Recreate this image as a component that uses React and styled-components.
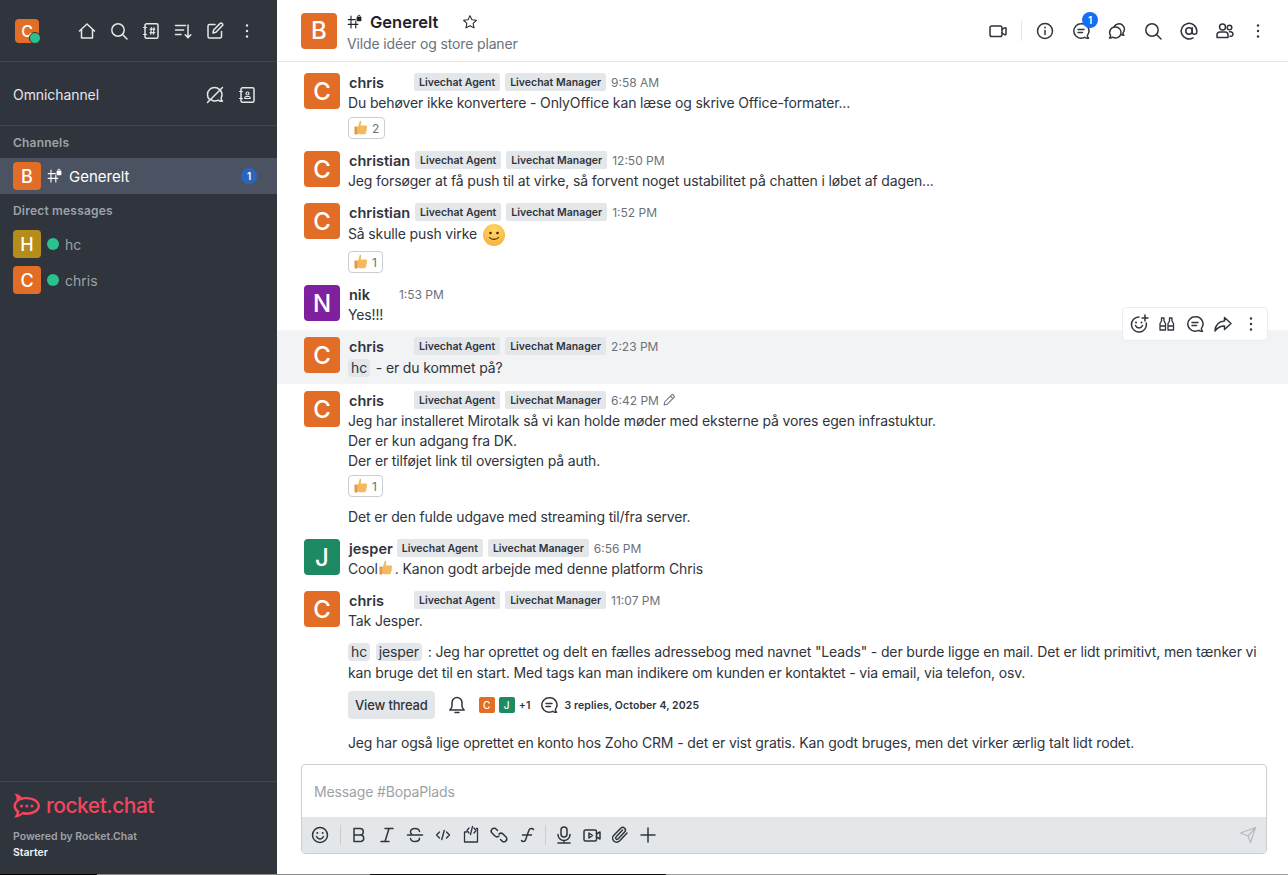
import React from 'react';
import styled, { createGlobalStyle } from 'styled-components';

const GlobalStyle = createGlobalStyle`
    html, body { margin: 0; padding: 0; height: 100%; background: #fff; }
    body { font-family: Inter, "Noto Sans", "Liberation Sans", sans-serif; overflow: hidden; }
    #root { height: 100%; }
`;

const Svg = ({ size = 20, sw = 1.5, children }) => (
    <svg width={size} height={size} viewBox="0 0 20 20" fill="none" stroke="currentColor" strokeWidth={sw} strokeLinecap="round" strokeLinejoin="round">
        {children}
    </svg>
);

const Dots = () => (
    <Svg>
        <circle cx="10" cy="4.5" r="1.2" fill="currentColor" stroke="none" />
        <circle cx="10" cy="10" r="1.2" fill="currentColor" stroke="none" />
        <circle cx="10" cy="15.5" r="1.2" fill="currentColor" stroke="none" />
    </Svg>
);
const Home = () => <Svg><path d="M2.5 10 10 3l7.5 7M4.5 8.5V17h11V8.5" /></Svg>;
const Search = () => <Svg><circle cx="9" cy="9" r="6.2" /><path d="m13.5 13.5 4.5 4.5" /></Svg>;
const Directory = () => (
    <Svg>
        <rect x="4" y="2.8" width="13" height="14.4" rx="1.5" />
        <path d="M2.5 6.5h3M2.5 13.5h3M9 8.2h4.8M9 11.6h4.8M10.4 6.6l-.6 6.6M13 6.6l-.6 6.6" strokeWidth="1.2" />
    </Svg>
);
const Sort = () => <Svg><path d="M2.5 4.5h10M2.5 9h8M2.5 13.5h5.5M15 4v12.5M12.2 13.8l2.8 2.8 2.8-2.8" /></Svg>;
const Compose = () => (
    <Svg>
        <path d="M16.5 10.5v5a1.5 1.5 0 0 1-1.5 1.5H4.5A1.5 1.5 0 0 1 3 15.5V5a1.5 1.5 0 0 1 1.5-1.5h5.5" />
        <path d="m8 12 .6-3L15.2 2.4a1.3 1.3 0 0 1 1.9 0l.3.3a1.3 1.3 0 0 1 0 1.9L10.9 11.3z" />
    </Svg>
);
const ChatOff = () => (
    <Svg>
        <path d="M4.5 14.5A7 7 0 0 1 14.6 4.6c2.5 2.2 3 5.4 1.5 8.2-.2 1 .5 2.5 1.400 3.2-1.800.5-3.200 0-4.200-.8-2.500 1.300-5.300 1-7.300-.5" />
        <path d="M2.5 17.5 17.5 2.5" />
    </Svg>
);
const ContactBook = () => (
    <Svg>
        <rect x="4" y="2.8" width="13" height="14.4" rx="1.5" />
        <path d="M2.5 6.5h3M2.5 13.5h3" strokeWidth="1.2" />
        <circle cx="10.5" cy="8.5" r="1.5" strokeWidth="1.2" />
        <path d="M7.8 13.5v-.5c0-1 .8-1.5 1.5-1.5h2.400c.7 0 1.500.5 1.500 1.500v.5z" strokeWidth="1.2" />
    </Svg>
);
const HashLock = ({ size = 16 }) => (
    <Svg size={size} sw={1.4}>
        <path d="M1.5 7h9M1.5 13h12M5 2.5 5 17.5M11 9v8.500" />
        <rect x="12" y="3.5" width="6" height="5.5" rx="1" fill="currentColor" stroke="none" />
        <path d="M13.5 3.8V3a1.500 1.500 0 0 1 3 0v.8" strokeWidth="1.1" />
    </Svg>
);
const Star = () => <Svg size={16} sw={1.3}><path d="m10 2 2.400 5.200 5.600.7-4.100 3.900 1.100 5.600-5-2.800-5 2.800 1.100-5.600L2 7.900l5.600-.7z" /></Svg>;
const Video = () => <Svg><rect x="2" y="5" width="12" height="10.5" rx="1.8" /><path d="m14 8.500 2.500-1.700c.6-.3 1.500 0 1.500.8v5.300c0 .8-.9 1.100-1.500.8L14 12" /></Svg>;
const Info = () => <Svg><circle cx="10" cy="10" r="7.5" /><path d="M10 9.500v4" /><circle cx="10" cy="6.5" r=".9" fill="currentColor" stroke="none" /></Svg>;
const Thread = () => (
    <Svg>
        <path d="M10 2.800a7.200 7.200 0 0 0 0 14.400c1.500 0 3-.1 3.800-.9.800.7 2.200 1.300 3.700.9-.8-.8-1.200-1.800-1.100-2.800A7.200 7.200 0 0 0 10 2.800z" />
        <path d="M7 8.500h6M7 11.500h4.500" />
    </Svg>
);
const Discussion = () => (
    <Svg>
        <path d="M8.500 6a5.500 5.500 0 1 1-2.800 10.200c-.8.6-1.900.9-3.200.8.700-.7 1.100-1.500 1.100-2.500A5.500 5.500 0 0 1 8.500 6z" />
        <path d="M7.200 5.500a5.500 5.500 0 1 1 8.800 6.500c-.1.900.2 1.600.8 2.200-.9.100-1.600-.1-2.300-.6" />
    </Svg>
);
const At = () => <Svg><circle cx="10" cy="10" r="3.2" /><path d="M13.200 6.800V11a2.300 2.300 0 0 0 4.600 0v-1A7.800 7.800 0 1 0 14 16.800" /></Svg>;
const Team = () => (
    <Svg>
        <circle cx="7.5" cy="6" r="3" />
        <path d="M2 16.500V14a3 3 0 0 1 3-3h5a3 3 0 0 1 3 3v2.500z" />
        <circle cx="14.500" cy="6.500" r="2.300" />
        <path d="M14.500 10.800h.8a2.800 2.800 0 0 1 2.700 2.800c0 1-.8 1.600-1.800 1.600h-1.200" />
    </Svg>
);
const SmilePlus = () => (
    <Svg>
        <path d="M10 3a7.500 7.500 0 1 0 7.300 6" />
        <path d="M6.500 11.500c.8 1.800 2.200 2.500 3.500 2.500s2.700-.7 3.500-2.500" />
        <circle cx="7" cy="8.500" r="1" fill="currentColor" stroke="none" />
        <circle cx="12.500" cy="8.500" r="1" fill="currentColor" stroke="none" />
        <path d="M16 1v6M13 4h6" />
    </Svg>
);
const Quote = () => (
    <Svg sw={1.3}>
        <path d="M3 16V9.500l1.500-2.500V4H7v3l1.500 2.500V16zM11 16V9.500L12.500 7V4H15v3l1.500 2.500V16zM3 12h5.500M11 12h5.500" />
    </Svg>
);
const Forward = () => <Svg><path d="M11.500 3.500 18 9.500l-6.500 6v-3.500C7.500 12 4.500 13.500 2 17c.3-5.500 3.500-9.500 9.500-10z" /></Svg>;
const Pencil = () => <Svg size={14}><path d="m3 17 1-4.500L13.800 2.800a1.500 1.500 0 0 1 2.200 0l1.200 1.200a1.500 1.500 0 0 1 0 2.200L7.500 16zM12 4.500l3.500 3.500" /></Svg>;
const Bell = () => <Svg><path d="M10 2.500a5 5 0 0 0-5 5v3.500c0 1.500-1 3-2.200 4h14.400c-1.200-1-2.200-2.500-2.200-4V7.500a5 5 0 0 0-5-5zM8 17.500h4" /></Svg>;
const Smile = () => (
    <Svg>
        <circle cx="10" cy="10" r="7.5" />
        <path d="M6.500 11.500c.8 1.800 2.200 2.500 3.500 2.500s2.700-.7 3.500-2.500" />
        <circle cx="7.300" cy="8" r="1" fill="currentColor" stroke="none" />
        <circle cx="12.700" cy="8" r="1" fill="currentColor" stroke="none" />
    </Svg>
);
const Bold = () => <Svg><path d="M5 3.500h6a3.200 3.200 0 0 1 0 6.500H5zM5 10h7a3.300 3.300 0 0 1 0 6.500H5z" /></Svg>;
const Italic = () => <Svg><path d="M8 3.500h8M4 16.500h8M12 3.500 8 16.500" /></Svg>;
const Strike = () => <Svg><path d="M2.500 10h15M14.500 6.500c-.3-2-2.200-3-4.500-3-2.600 0-4.500 1.200-4.500 3.200 0 .9.300 1.600.9 2.100M5.500 13.500c.3 2 2.200 3 4.500 3 2.600 0 4.500-1.200 4.500-3.200" /></Svg>;
const Code = () => <Svg sw={1.4}><path d="m6.500 7-3 3 3 3M13.500 7l3 3-3 3M11.200 5.500 8.800 14.500" /></Svg>;
const CodeBlock = () => (
    <Svg sw={1.3}>
        <path d="M5.500 7H3.500V17h13V3.500h-1" />
        <path d="M8 3 6 5.500 8 8M13 3l2 2.500L13 8M11.500 1.500 9.500 9.500" />
    </Svg>
);
const Link = () => <Svg><path d="M8.500 5.500 6.500 3.500a3 3 0 0 0-4 4l3.500 3.500a3 3 0 0 0 4 0M11.500 14.500l2 2a3 3 0 0 0 4-4L14 9a3 3 0 0 0-4 0" /></Svg>;
const Katex = () => <Svg><path d="M16.500 4.500c-1-1.500-3.500-1.500-4.500.5L8.500 15c-.7 2-3 2-4 .5M5.500 10h9" /></Svg>;
const Mic = () => <Svg><rect x="7" y="2" width="6" height="10" rx="3" /><path d="M4 9.500a6 6 0 0 0 12 0M10 15.500v2M4 18h12" /></Svg>;
const VideoMsg = () => <Svg><rect x="2" y="5" width="12.500" height="11" rx="1.500" /><path d="m7 8 3.500 2.500L7 13zM14.500 9l3.500-2v7l-3.500-2" /></Svg>;
const Clip = () => <Svg><path d="M17 8 9.500 16a4 4 0 0 1-5.700-5.700L11 3a2.700 2.700 0 0 1 3.800 3.800L8 14a1.300 1.300 0 0 1-2-1.900l6.500-7" /></Svg>;
const Plus = () => <Svg><path d="M10 3v14M3 10h14" /></Svg>;
const Send = () => <Svg sw={1.2}><path d="m2.500 8 15-5.500-5 15-2.500-6.500zM17.500 2.500 10 11" /></Svg>;

const Thumb = () => (
    <svg width="16" height="16" viewBox="0 0 16 16">
        <path d="M6.800.8c.9-.3 1.600.5 1.500 1.400-.1 1.200-.7 2.200-.7 3.300h5.300c1.600 0 1.800 2.200.5 2.500.9.600.8 2-.2 2.300.7.700.4 1.900-.5 2.100.4.900-.2 1.800-1.200 1.800H7.400c-1.100 0-1.900-.5-2.700-.8V6.800C5.800 5.300 6.300 2.500 6.800.8z" fill="#f4b860" />
        <rect x="1.500" y="6.500" width="3.200" height="8" rx=".8" fill="#e39a3f" />
    </svg>
);

const Shell = styled.div`
    display: flex;
    flex-direction: column;
    width: 1288px;
    height: 875px;
    overflow: hidden;
    background: #fff;
    color: #2f343d;
`;

const Panes = styled.div`
    display: flex;
    flex: 1;
    min-height: 0;
`;

/* the 1px strip the capture caught from whatever sat under the window */
const ScreenEdge = styled.div`
    flex: none;
    height: 1px;
    background: linear-gradient(90deg, #000 0 97px, #8a8a8a 97px 370px, #111 370px 666px, #999 666px);
`;

const Sidebar = styled.aside`
    display: flex;
    flex-direction: column;
    flex: 0 0 277px;
    background: #2f343d;
    color: #e4e7ea;
`;

const SideTop = styled.div`
    display: flex;
    align-items: center;
    justify-content: space-between;
    height: 61px;
    padding: 0 20px 0 15px;
    border-bottom: 1px solid #404754;
`;

const SideIcons = styled.div`
    display: flex;
    gap: 12px;
    color: #e4e7ea;
    & > svg { display: block; }
`;

const Avatar = styled.div`
    display: flex;
    align-items: center;
    justify-content: center;
    flex: none;
    position: relative;
    width: ${p => p.$size || 28}px;
    height: ${p => p.$size || 28}px;
    border-radius: 4px;
    background: ${p => p.$bg || '#e26d26'};
    color: #fff;
    font-size: ${p => p.$font || 18}px;
    font-weight: 500;
`;

const StatusBadge = styled.span`
    position: absolute;
    right: -2px;
    bottom: -1px;
    box-sizing: border-box;
    width: 12px;
    height: 12px;
    border-radius: 50%;
    background: #2bc08f;
    border: 1px solid #2f343d;
`;

const OmniRow = styled.div`
    display: flex;
    align-items: center;
    justify-content: space-between;
    box-sizing: border-box;
    height: 64px;
    padding: 2px 20px 0 13px;
    font-size: 14px;
    letter-spacing: -.08px;
    color: #e4e7ea;
    border-bottom: 1px solid #404754;
`;

const OmniIcons = styled.div`
    display: flex;
    gap: 12px;
`;

const SectionLabel = styled.div`
    height: 32px;
    padding-left: 13px;
    line-height: 33px;
    font-size: 12px;
    font-weight: 600;
    letter-spacing: .2px;
    color: #9ea2a8;
`;

const RoomRow = styled.div`
    display: flex;
    align-items: center;
    height: 36px;
    padding: 0 20px 0 13px;
    gap: 6px;
    background: ${p => p.$active ? '#4b5362' : 'transparent'};
    color: ${p => p.$active ? '#fff' : '#9ea2a8'};
    font-size: ${p => p.$active ? 15 : 14}px;
`;

const Presence = styled.span`
    flex: none;
    width: 12px;
    height: 12px;
    border-radius: 50%;
    background: #2bc08f;
`;

const UnreadBadge = styled.span`
    display: flex;
    align-items: center;
    justify-content: center;
    margin-left: auto;
    width: 16px;
    height: 16px;
    border-radius: 50%;
    background: #2a66c0;
    color: #fff;
    font-size: 10px;
    font-weight: 600;
`;

const SideFooter = styled.div`
    margin-top: auto;
    box-sizing: border-box;
    height: 93px;
    padding: 10px 13px 0;
    border-top: 1px solid #404754;
`;

const Logo = styled.div`
    display: flex;
    align-items: center;
    gap: 5px;
    height: 26px;
    color: #f5455c;
    font-size: 21px;
    font-weight: 500;
    letter-spacing: -.5px;
`;

const PoweredBy = styled.div`
    margin-top: 11px;
    font-size: 10.5px;
    line-height: 16px;
    font-weight: 600;
    color: #9ea2a8;
`;

const Plan = styled.div`
    font-size: 10.5px;
    line-height: 16px;
    font-weight: 600;
    color: #f2f3f5;
`;

const Main = styled.main`
    display: flex;
    flex-direction: column;
    flex: 1;
    min-width: 0;
`;

const Header = styled.header`
    display: flex;
    align-items: center;
    flex: none;
    height: 61px;
    padding: 0 20px 0 24px;
    gap: 10px;
    border-bottom: 1px solid #e4e7ea;
`;

const TitleBlock = styled.div`
    display: flex;
    flex-direction: column;
    gap: 4px;
    padding-top: 2px;
`;

const TitleRow = styled.div`
    display: flex;
    align-items: center;
    gap: 7px;
    color: #1f2329;
    font-size: 16.5px;
    line-height: 20px;
    font-weight: 600;
    & > svg:last-child { margin-left: 17px; }
`;

const Topic = styled.div`
    font-size: 14px;
    line-height: 16px;
    letter-spacing: -.14px;
    color: #6c727a;
`;

const HeaderTools = styled.div`
    display: flex;
    align-items: center;
    gap: 16px;
    margin-left: auto;
    color: #2f343d;
`;

const ToolSlot = styled.span`
    display: flex;
    align-items: center;
    justify-content: center;
    position: relative;
    width: 20px;
    height: 20px;
    margin-left: ${p => p.$left || 0}px;
`;

const ToolDivider = styled.span`
    width: 1px;
    height: 20px;
    margin: 0 -3px;
    background: #e4e7ea;
`;

const ToolBadge = styled.span`
    position: absolute;
    top: -9px;
    right: -7px;
    display: flex;
    align-items: center;
    justify-content: center;
    width: 16px;
    height: 16px;
    border-radius: 50%;
    background: #156ff5;
    color: #fff;
    font-size: 10px;
    font-weight: 600;
`;

const Messages = styled.div`
    flex: 1;
    min-height: 0;
    overflow: hidden;
    padding-top: 4px;
`;

const MessageRow = styled.div`
    position: relative;
    display: flex;
    gap: 9px;
    padding: 7px 20px 5px 27px;
    background: ${p => p.$hover ? '#f2f3f5' : 'transparent'};
`;

const Body = styled.div`
    flex: 1;
    min-width: 0;
`;

const MetaRow = styled.div`
    display: flex;
    align-items: center;
    height: 18px;
    margin-bottom: 2px;
`;

const UserName = styled.span`
    margin-right: ${p => p.$gap}px;
    font-size: 14.5px;
    font-weight: 600;
    color: #2f343d;
`;

const RoleTag = styled.span`
    display: flex;
    align-items: center;
    height: 18px;
    margin-right: 5px;
    padding: 0 5px;
    border-radius: 2px;
    background: #e4e7ea;
    color: #2f343d;
    font-size: 10.5px;
    font-weight: 600;
`;

const Time = styled.span`
    font-size: 12px;
    color: #6c727a;
`;

const EditIcon = styled.span`
    display: flex;
    margin-left: 3px;
    color: #6c727a;
`;

const Text = styled.div`
    font-size: 14px;
    line-height: 20px;
    letter-spacing: -.14px;
    color: #2f343d;
    margin-top: ${p => p.$top || 0}px;
    margin-left: -1px;
`;

const Mention = styled.span`
    display: inline-block;
    margin: 2px 2px 2px 0;
    padding: 0 3px;
    border-radius: 4px;
    background: #e4e7ea;
    line-height: 18px;
`;

const SmileEmoji = styled.span`
    display: inline-block;
    position: relative;
    width: 22px;
    height: 22px;
    margin: 1px 0 1px 6px;
    vertical-align: middle;
    border-radius: 50%;
    background: radial-gradient(circle at 50% 30%, #ffd865, #f7a93a);
    & > svg { position: absolute; inset: 0; }
`;

const InlineThumb = styled.span`
    display: inline-block;
    width: 16px;
    height: 16px;
    margin: 0 1px 0 0;
    vertical-align: -2px;
`;

const Reaction = styled.div`
    display: inline-flex;
    align-items: center;
    gap: 3px;
    box-sizing: border-box;
    height: 22px;
    margin: 4px 0 0 -1px;
    padding: 0 5px 0 4px;
    border: 1px solid #cbced1;
    border-radius: 4px;
    font-size: 12px;
    color: #6c727a;
`;

const ReactionLine = styled.div`
    display: flex;
`;

const FloatingTools = styled.div`
    position: absolute;
    top: -23px;
    right: 20px;
    display: flex;
    align-items: center;
    gap: 8px;
    box-sizing: border-box;
    height: 34px;
    padding: 0 6px;
    background: #fff;
    border: 1px solid #ebecef;
    border-radius: 4px;
    color: #2f343d;
`;

const ThreadBar = styled.div`
    display: flex;
    align-items: center;
    margin-top: 8px;
    height: 28px;
`;

const ThreadButton = styled.div`
    display: flex;
    align-items: center;
    height: 28px;
    margin: 0 12px 0 -1px;
    padding: 0 7px;
    border-radius: 4px;
    background: #e4e7ea;
    color: #2f343d;
    font-size: 13px;
    font-weight: 500;
    letter-spacing: -.15px;
`;

const Follower = styled.span`
    display: flex;
    align-items: center;
    justify-content: center;
    width: 16px;
    height: 16px;
    margin-right: 4px;
    border-radius: 2px;
    background: ${p => p.$bg};
    color: #fff;
    font-size: 10px;
    font-weight: 500;
`;

const ThreadMeta = styled.span`
    font-size: 10.5px;
    font-weight: 600;
    letter-spacing: .1px;
    color: #2f343d;
    margin-left: ${p => p.$left || 0}px;
`;

const Composer = styled.div`
    flex: none;
    margin: 0 21px 20px 24px;
    border: 1px solid #cbced1;
    border-radius: 4px;
    overflow: hidden;
`;

const ComposerInput = styled.div`
    height: 52px;
    padding-left: 12px;
    line-height: 54px;
    font-size: 14px;
    letter-spacing: -.14px;
    color: #9ea2a8;
`;

const ComposerBar = styled.div`
    display: flex;
    align-items: center;
    height: 36px;
    padding: 0 8px;
    gap: 8px;
    background: #e4e7ea;
    color: #2f343d;
`;

const BarDivider = styled.span`
    width: 1px;
    height: 20px;
    margin-left: ${p => p.$left || 0}px;
    background: #cbced1;
`;

const SendSlot = styled.span`
    display: flex;
    margin-left: auto;
    color: #b5b9be;
`;

const agentRoles = (
    <>
        <RoleTag>Livechat Agent</RoleTag>
        <RoleTag>Livechat Manager</RoleTag>
    </>
);

const ThumbReaction = ({ count }) => (
    <ReactionLine>
        <Reaction><Thumb />{count}</Reaction>
    </ReactionLine>
);

const Message = ({ name, gap, time, letter = 'C', bg, hover, edited, tools, children }) => (
    <MessageRow $hover={hover}>
        <Avatar $size={36} $bg={bg} $font={24}>{letter}</Avatar>
        <Body>
            <MetaRow>
                <UserName $gap={gap}>{name}</UserName>
                {letter !== 'N' && agentRoles}
                <Time>{time}</Time>
                {edited && <EditIcon><Pencil /></EditIcon>}
            </MetaRow>
            {children}
        </Body>
        {tools}
    </MessageRow>
);

export default function App() {
    return (
        <Shell>
            <GlobalStyle />
            <Panes>
                <Sidebar>
                    <SideTop>
                        <Avatar $size={24} $font={16}>C<StatusBadge /></Avatar>
                        <SideIcons>
                            <Home /><Search /><Directory /><Sort /><Compose /><Dots />
                        </SideIcons>
                    </SideTop>
                    <OmniRow>
                        Omnichannel
                        <OmniIcons><ChatOff /><ContactBook /></OmniIcons>
                    </OmniRow>
                    <SectionLabel>Channels</SectionLabel>
                    <RoomRow $active>
                        <Avatar>B</Avatar>
                        <HashLock />
                        Generelt
                        <UnreadBadge>1</UnreadBadge>
                    </RoomRow>
                    <SectionLabel>Direct messages</SectionLabel>
                    <RoomRow><Avatar $bg="#b68d1c">H</Avatar><Presence />hc</RoomRow>
                    <RoomRow><Avatar>C</Avatar><Presence />chris</RoomRow>
                    <SideFooter>
                        <Logo>
                            <svg width="28" height="25" viewBox="0 0 28 25">
                                <path d="M1.500 .5c3.200.2 5.500 1.700 7.500 4 1.500-.4 3-.5 4.500-.5C21 4 27 7.800 27 13s-6 9-13.500 9c-1.500 0-3-.2-4.300-.5C7.500 23.300 5 24.500 1 24.500c1.500-1.800 2.800-3.500 2.500-5.500C1.500 17.500.5 15.300.5 13s1-4.200 3-5.700C4 5 3 2.800 1.500.5z" fill="#f5455c" />
                                <path d="M13.500 6.300C8 6.300 3 9 3 13c0 2 1.300 3.700 3.300 4.800.2 1.200-.1 2.300-.7 3.600 1.700-.5 3.200-1.500 4.200-2.600 1.200.3 2.400.5 3.700.5 5.800 0 11-2.600 11-6.300s-5.200-6.700-11-6.700z" fill="#2f343d" />
                                <circle cx="8.500" cy="13" r="1.500" fill="#f5455c" />
                                <circle cx="13.800" cy="13" r="1.500" fill="#f5455c" />
                                <circle cx="19" cy="13" r="1.500" fill="#f5455c" />
                            </svg>
                            rocket.chat
                        </Logo>
                        <PoweredBy>Powered by Rocket.Chat</PoweredBy>
                        <Plan>Starter</Plan>
                    </SideFooter>
                </Sidebar>
                <Main>
                    <Header>
                        <Avatar $size={36} $font={24}>B</Avatar>
                        <TitleBlock>
                            <TitleRow><HashLock />Generelt<Star /></TitleRow>
                            <Topic>Vilde idéer og store planer</Topic>
                        </TitleBlock>
                        <HeaderTools>
                            <ToolSlot><Video /></ToolSlot>
                            <ToolDivider />
                            <ToolSlot><Info /></ToolSlot>
                            <ToolSlot><Thread /><ToolBadge>1</ToolBadge></ToolSlot>
                            <ToolSlot><Discussion /></ToolSlot>
                            <ToolSlot><Search /></ToolSlot>
                            <ToolSlot><At /></ToolSlot>
                            <ToolSlot><Team /></ToolSlot>
                            <ToolSlot $left={-3}><Dots /></ToolSlot>
                        </HeaderTools>
                    </Header>
                    <Messages>
                        <Message name="chris" gap={30} time="9:58 AM">
                            <Text>Du behøver ikke konvertere - OnlyOffice kan læse og skrive Office-formater...</Text>
                            <ThumbReaction count={2} />
                        </Message>
                        <Message name="christian" gap={5} time="12:50 PM">
                            <Text>Jeg forsøger at få push til at virke, så forvent noget ustabilitet på chatten i løbet af dagen...</Text>
                        </Message>
                        <Message name="christian" gap={5} time="1:52 PM">
                            <Text>
                                Så skulle push virke
                                <SmileEmoji>
                                    <svg width="22" height="22" viewBox="0 0 22 22" fill="none">
                                        <circle cx="7.500" cy="9" r="1.300" fill="#3a2a12" />
                                        <circle cx="14.500" cy="9" r="1.300" fill="#3a2a12" />
                                        <path d="M6.500 13.500c2 2.500 7 2.500 9 0" stroke="#3a2a12" strokeWidth="1.200" strokeLinecap="round" />
                                    </svg>
                                </SmileEmoji>
                            </Text>
                            <ThumbReaction count={1} />
                        </Message>
                        <Message name="nik" gap={29} time="1:53 PM" letter="N" bg="#7f219e">
                            <Text>Yes!!!</Text>
                        </Message>
                        <Message
                            name="chris"
                            gap={30}
                            time="2:23 PM"
                            hover
                            tools={
                                <FloatingTools>
                                    <SmilePlus /><Quote /><Thread /><Forward /><Dots />
                                </FloatingTools>
                            }
                        >
                            <Text><Mention>hc</Mention> - er du kommet på?</Text>
                        </Message>
                        <Message name="chris" gap={30} time="6:42 PM" edited>
                            <Text>
                                Jeg har installeret Mirotalk så vi kan holde møder med eksterne på vores egen infrastuktur.<br />
                                Der er kun adgang fra DK.<br />
                                Der er tilføjet link til oversigten på auth.
                            </Text>
                            <ThumbReaction count={1} />
                            <Text $top={10}>Det er den fulde udgave med streaming til/fra server.</Text>
                        </Message>
                        <Message name="jesper" gap={4} time="6:56 PM" bg="#1d8a63" letter="J">
                            <Text>Cool<InlineThumb><Thumb /></InlineThumb>. Kanon godt arbejde med denne platform Chris</Text>
                        </Message>
                        <Message name="chris" gap={30} time="11:07 PM">
                            <Text>Tak Jesper.</Text>
                            <Text $top={10}>
                                <Mention>hc</Mention> <Mention>jesper</Mention> : Jeg har oprettet og delt en fælles adressebog med navnet "Leads" - der burde ligge en mail. Det er lidt primitivt, men tænker vi kan bruge det til en start. Med tags kan man indikere om kunden er kontaktet - via email, via telefon, osv.
                            </Text>
                            <ThreadBar>
                                <ThreadButton>View thread</ThreadButton>
                                <Bell />
                                <ThreadMeta $left={12} />
                                <Follower $bg="#e26d26">C</Follower>
                                <Follower $bg="#1d8a63">J</Follower>
                                <ThreadMeta>+1</ThreadMeta>
                                <ThreadMeta $left={9} />
                                <Thread />
                                <ThreadMeta $left={5}>3 replies, October 4, 2025</ThreadMeta>
                            </ThreadBar>
                            <Text $top={14}>Jeg har også lige oprettet en konto hos Zoho CRM - det er vist gratis. Kan godt bruges, men det virker ærlig talt lidt rodet.</Text>
                        </Message>
                    </Messages>
                    <Composer>
                        <ComposerInput>Message #BopaPlads</ComposerInput>
                        <ComposerBar>
                            <Smile />
                            <BarDivider $left={2} />
                            <Bold /><Italic /><Strike /><Code /><CodeBlock /><Link /><Katex />
                            <BarDivider />
                            <Mic /><VideoMsg /><Clip /><Plus />
                            <SendSlot><Send /></SendSlot>
                        </ComposerBar>
                    </Composer>
                </Main>
            </Panes>
            <ScreenEdge />
        </Shell>
    );
}
